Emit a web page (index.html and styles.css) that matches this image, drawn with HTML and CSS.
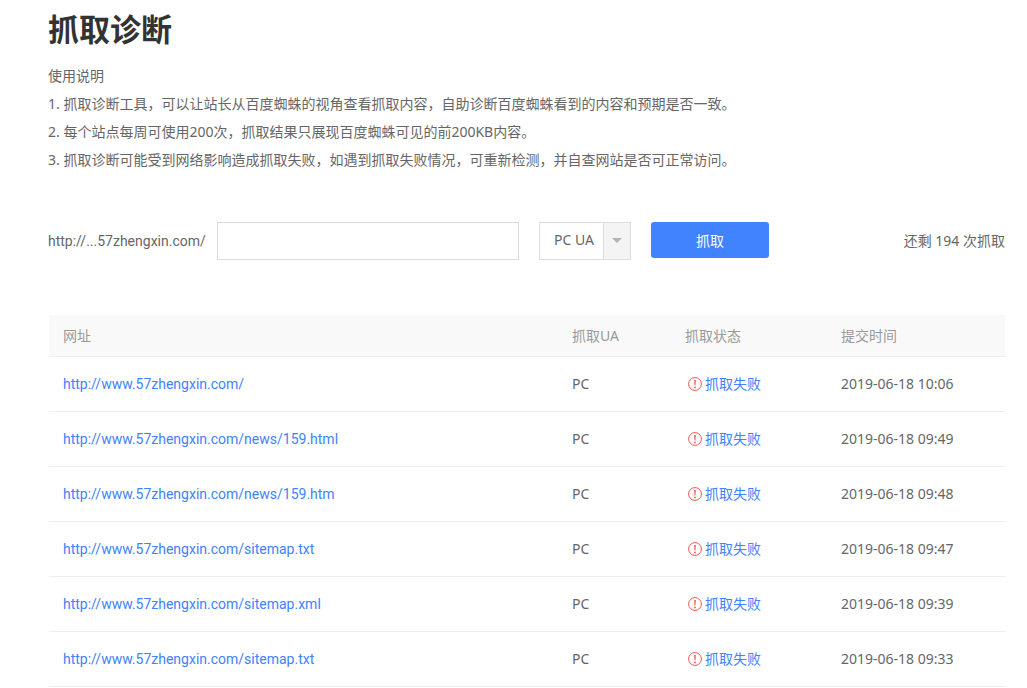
FILE: index.html
```html
<!DOCTYPE html>
<html lang="zh-CN">
  <head>
    <meta charset="UTF-8" />
    <title>抓取诊断</title>
    <link rel="stylesheet" href="styles.css">
  </head>
  <body>
    <!-- error icon, used in every status cell -->
    <svg class="sprite" width="0" height="0" aria-hidden="true">
      <symbol id="icon-error" viewBox="0 0 14 14">
        <circle cx="7" cy="7" r="6.4" fill="none" stroke="currentColor" stroke-width="1" />
        <path d="M6.2 3h1.6l-.3 5.6h-1z" fill="currentColor" />
        <circle cx="7" cy="10.4" r=".9" fill="currentColor" />
      </symbol>
    </svg>

    <main class="page">
      <h1>抓取诊断</h1>

      <div class="intro">
        <p>使用说明</p>
        <p>1. 抓取诊断工具，可以让站长从百度蜘蛛的视角查看抓取内容，自助诊断百度蜘蛛看到的内容和预期是否一致。</p>
        <p>2. 每个站点每周可使用200次，抓取结果只展现百度蜘蛛可见的前200KB内容。</p>
        <p>3. 抓取诊断可能受到网络影响造成抓取失败，如遇到抓取失败情况，可重新检测，并自查网站是否可正常访问。</p>
      </div>

      <form class="fetch-form" onsubmit="return false">
        <label class="site" for="fetch-path">http://...57zhengxin.com/</label>
        <input type="text" id="fetch-path" />
        <div class="ua-select">
          <select id="fetch-ua" aria-label="抓取UA">
            <option value="pc">PC UA</option>
            <option value="mobile">移动 UA</option>
          </select>
        </div>
        <button type="submit" id="fetch-btn">抓取</button>
        <span class="remain">还剩 194 次抓取</span>
      </form>

      <table>
        <thead>
          <tr>
            <th>网址</th>
            <th class="col-ua">抓取UA</th>
            <th class="col-status">抓取状态</th>
            <th class="col-time">提交时间</th>
          </tr>
        </thead>
        <tbody>
          <tr>
            <td><a href="#" class="url">http://www.57zhengxin.com/</a></td>
            <td>PC</td>
            <td><a href="#" class="status"><svg><use href="#icon-error" /></svg>抓取失败</a></td>
            <td>2019-06-18 10:06</td>
          </tr>
          <tr>
            <td><a href="#" class="url">http://www.57zhengxin.com/news/159.html</a></td>
            <td>PC</td>
            <td><a href="#" class="status"><svg><use href="#icon-error" /></svg>抓取失败</a></td>
            <td>2019-06-18 09:49</td>
          </tr>
          <tr>
            <td><a href="#" class="url">http://www.57zhengxin.com/news/159.htm</a></td>
            <td>PC</td>
            <td><a href="#" class="status"><svg><use href="#icon-error" /></svg>抓取失败</a></td>
            <td>2019-06-18 09:48</td>
          </tr>
          <tr>
            <td><a href="#" class="url">http://www.57zhengxin.com/sitemap.txt</a></td>
            <td>PC</td>
            <td><a href="#" class="status"><svg><use href="#icon-error" /></svg>抓取失败</a></td>
            <td>2019-06-18 09:47</td>
          </tr>
          <tr>
            <td><a href="#" class="url">http://www.57zhengxin.com/sitemap.xml</a></td>
            <td>PC</td>
            <td><a href="#" class="status"><svg><use href="#icon-error" /></svg>抓取失败</a></td>
            <td>2019-06-18 09:39</td>
          </tr>
          <tr>
            <td><a href="#" class="url">http://www.57zhengxin.com/sitemap.txt</a></td>
            <td>PC</td>
            <td><a href="#" class="status"><svg><use href="#icon-error" /></svg>抓取失败</a></td>
            <td>2019-06-18 09:33</td>
          </tr>
        </tbody>
      </table>
    </main>
  </body>
</html>
```
FILE: styles.css
```css
* {
  box-sizing: border-box;
}

body {
  font-family: "Noto Sans", "Noto Sans CJK SC", sans-serif;
  font-size: 14px;
  line-height: 28px;
  color: #666;
  background: #fff;
  margin: 0;
}

.sprite {
  position: absolute;
}

.page {
  padding: 0 22px 0 48px;
}

h1 {
  margin: 0;
  padding-bottom: 4px;
  font-size: 31px;
  line-height: 58px;
  color: #333;
}

.intro p {
  margin: 0;
}

a {
  color: #4182ff;
  text-decoration: none;
}

.url,
.site {
  font-family: Roboto, sans-serif;
}

.fetch-form {
  display: flex;
  align-items: flex-start;
  margin: 48px 0 55px;
  line-height: 38px;
}

.site {
  flex: 0 0 169px;
  white-space: nowrap;
}

input,
select,
button {
  font: inherit;
  color: inherit;
}

#fetch-path {
  width: 302px;
  height: 38px;
  padding: 0 10px;
  border: 1px solid #ddd;
}

.ua-select {
  position: relative;
  width: 92px;
  height: 38px;
  margin: 0 20px;
}

.ua-select select {
  display: block;
  appearance: none;
  width: 100%;
  height: 100%;
  padding: 0 26px 2px 14px;
  border: 1px solid #ddd;
  border-radius: 0;
  background: #fff;
  line-height: 28px;
}

/* grey arrow box on top of the select */
.ua-select::before {
  content: "";
  position: absolute;
  top: 1px;
  right: 1px;
  bottom: 1px;
  width: 26px;
  border-left: 1px solid #ddd;
  background: #f4f4f4;
  pointer-events: none;
}

.ua-select::after {
  content: "";
  position: absolute;
  top: 16px;
  right: 9px;
  border: 5px solid transparent;
  border-top-color: #b4b4b4;
  border-bottom: 0;
  pointer-events: none;
}

#fetch-btn {
  width: 118px;
  height: 36px;
  padding: 0;
  border: none;
  border-radius: 3px;
  background: #4182ff;
  color: #fff;
  cursor: pointer;
}

.remain {
  margin-left: auto;
}

table {
  width: 100%;
  padding-left: 1px;
  border-spacing: 0;
  table-layout: fixed;
}

th,
td {
  padding: 0 14px;
  border-bottom: 1px solid #eee;
  text-align: left;
}

th {
  height: 42px;
  background: #f9f9f9;
  color: #999;
  font-weight: normal;
}

td {
  height: 55px;
}

.col-ua {
  width: 113px;
}

.col-status {
  width: 156px;
}

.col-time {
  width: 178px;
}

.status {
  display: flex;
  align-items: center;
  gap: 3px;
  padding-left: 3px;
}

.status svg {
  width: 14px;
  height: 14px;
  color: #f5554a;
}
```
